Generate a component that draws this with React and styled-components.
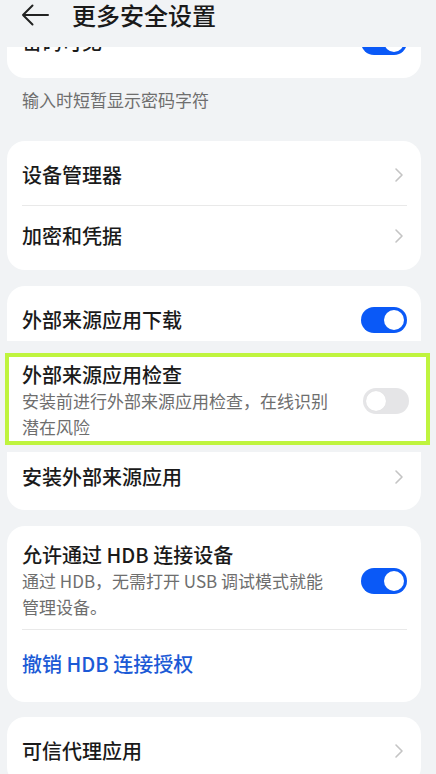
import React from 'react'
import styled, { createGlobalStyle } from 'styled-components'

const GlobalStyle = createGlobalStyle`
    html, body {
        margin : 0;
        padding : 0;
        background : #f1f3f5;
        overflow : hidden;
    }
    body {
        font-family : "Noto Sans CJK SC", "Noto Sans", sans-serif;
        color : #1a1a1a;
    }
`

const Page = styled.div`
    width : 436px;
    height : 774px;
    overflow : hidden;
    background : #f1f3f5;
`
const Header = styled.div`
    position : relative;
    z-index : 2;
    height : 47px;
    background : #f1f3f5;
    display : flex;
    align-items : flex-start;
    padding : 1px 0 0 21px;
    box-sizing : border-box;
`
const BackButton = styled.div`
    width : 28px;
    height : 28px;
    display : flex;
    align-items : center;
`
const Title = styled.h1`
    margin : 0 0 0 23px;
    font-size : 24px;
    line-height : 28px;
    font-weight : 500;
    color : #1a1a1a;
`
const Body = styled.div`
    padding : 0 15px 0 7px;
    display : flex;
    flex-direction : column;
`
const Card = styled.div`
    background : #fff;
    border-radius : 18px;
    padding : 4px 0 ${props => props.padBottom || '4px'};
    margin-top : ${props => props.top || '16px'};
    overflow : hidden;
`
const Row = styled.div`
    display : flex;
    align-items : center;
    justify-content : space-between;
    min-height : ${props => props.height || '60px'};
    padding : ${props => props.padTop || '0'} 14px ${props => props.padBottom || '0'} 15px;
    box-sizing : border-box;
`
const Texts = styled.div`
    display : flex;
    flex-direction : column;
    max-width : ${props => props.width || '322px'};
`
const Label = styled.div`
    font-size : 20px;
    line-height : 26px;
    font-weight : 500;
    color : ${props => props.color || '#1a1a1a'};
`
const Sub = styled.div`
    font-size : 17px;
    line-height : 26px;
    color : #6e6e6e;
`
const Divider = styled.div`
    height : 1px;
    background : #e9e9e9;
    margin : 0 14px 0 15px;
`
const Note = styled.div`
    font-size : 17px;
    line-height : 24px;
    color : #6e6e6e;
    padding : 10px 15px 0;
    margin-bottom : 13px;
`
const Track = styled.div`
    width : 46px;
    height : 26px;
    border-radius : 13px;
    background : ${props => props.on ? '#0a59f7' : '#e5e5e7'};
    display : flex;
    align-items : center;
    justify-content : ${props => props.on ? 'flex-end' : 'flex-start'};
    padding : 0 3px;
    box-sizing : border-box;
    flex-shrink : 0;
`
const Knob = styled.div`
    width : 20px;
    height : 20px;
    border-radius : 50%;
    background : #fff;
    box-shadow : ${props => props.on ? 'none' : '0 0 1px rgba(0,0,0,0.08)'};
`
const Chevron = styled.svg`
    width : 10px;
    height : 16px;
    margin-right : 3px;
    flex-shrink : 0;
`
const SplitTop = styled.div`
    background : #fff;
    border-radius : 18px 18px 0 0;
    margin-top : 16px;
    height : 55px;
    padding-top : 4px;
    box-sizing : border-box;
    overflow : hidden;
`
const Highlight = styled.div`
    margin : 12px -9px 0 -2px;
    border : 4px solid #bff43e;
    background : #fff;
    padding : 1px 0;
`
const HighlightRow = styled(Row)`
    padding : 4px 17px 0 13px;
`
const SplitBottom = styled.div`
    background : #fff;
    border-radius : 0 0 18px 18px;
    margin-top : 7px;
    padding-bottom : 8px;
`

function Toggle({ on }) {
    return (
        <Track on={on}>
            <Knob on={on} />
        </Track>
    )
}

function Arrow() {
    return (
        <Chevron viewBox="0 0 10 16">
            <path d="M2 2 L8 8 L2 14" fill="none" stroke="#c4c4c4" strokeWidth="1.6" strokeLinecap="round" strokeLinejoin="round" />
        </Chevron>
    )
}

export default function App() {
    return (
        <Page>
            <GlobalStyle />
            <Header>
                <BackButton>
                    <svg width="28" height="22" viewBox="0 0 28 22">
                        <path d="M2 11 H27 M11.5 1.5 L2 11 L11.5 20.5" fill="none" stroke="#222" strokeWidth="2" strokeLinecap="round" strokeLinejoin="round" />
                    </svg>
                </BackButton>
                <Title>更多安全设置</Title>
            </Header>
            <Body>
                <Card top="-39px" padBottom="6px">
                    <Row>
                        <Label>密码可见</Label>
                        <Toggle on />
                    </Row>
                </Card>
                <Note>输入时短暂显示密码字符</Note>

                <Card>
                    <Row>
                        <Label>设备管理器</Label>
                        <Arrow />
                    </Row>
                    <Divider />
                    <Row>
                        <Label>加密和凭据</Label>
                        <Arrow />
                    </Row>
                </Card>

                <SplitTop>
                    <Row>
                        <Label>外部来源应用下载</Label>
                        <Toggle on />
                    </Row>
                </SplitTop>
                <Highlight>
                    <HighlightRow>
                        <Texts>
                            <Label>外部来源应用检查</Label>
                            <Sub>安装前进行外部来源应用检查，在线识别潜在风险</Sub>
                        </Texts>
                        <Toggle />
                    </HighlightRow>
                </Highlight>
                <SplitBottom>
                    <Row height="50px">
                        <Label>安装外部来源应用</Label>
                        <Arrow />
                    </Row>
                </SplitBottom>

                <Card>
                    <Row padTop="12px" padBottom="9px">
                        <Texts width="308px">
                            <Label>允许通过 HDB 连接设备</Label>
                            <Sub>通过 HDB，无需打开 USB 调试模式就能管理设备。</Sub>
                        </Texts>
                        <Toggle on />
                    </Row>
                    <Divider />
                    <Row height="68px">
                        <Label color="#1b5ad6">撤销 HDB 连接授权</Label>
                    </Row>
                </Card>

                <Card top="15px">
                    <Row>
                        <Label>可信代理应用</Label>
                        <Arrow />
                    </Row>
                </Card>
            </Body>
        </Page>
    )
}
